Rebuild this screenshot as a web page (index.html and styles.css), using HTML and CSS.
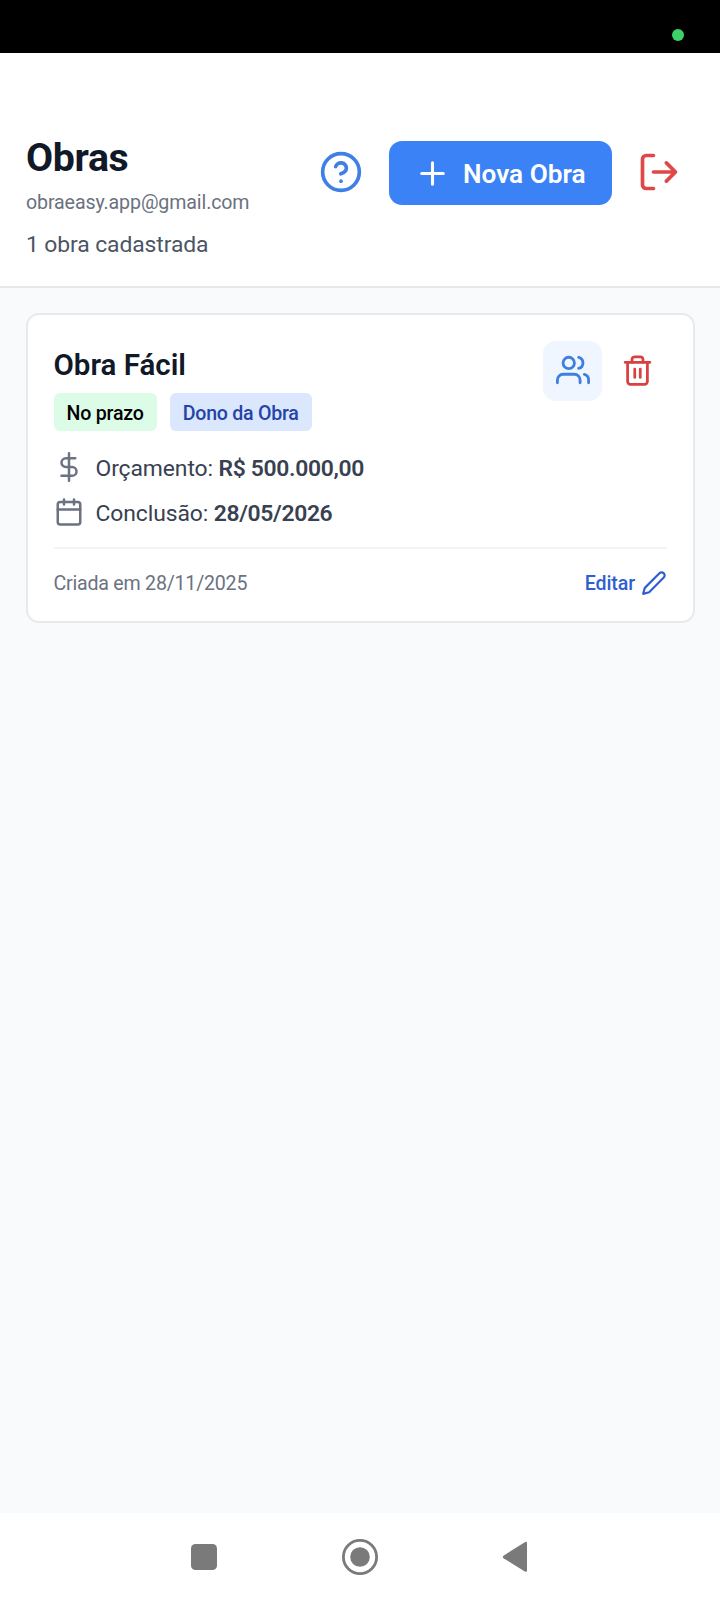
FILE: index.html
```html
<!DOCTYPE html>
<html lang="pt-BR">
<head>
    <meta charset="UTF-8">
    <meta name="viewport" content="width=device-width, initial-scale=1.0">
    <title>Obras</title>
    <link rel="stylesheet" href="styles.css">
</head>
<body>
    <div class="status-bar">
        <span class="status-dot"></span>
    </div>

    <header class="header">
        <div class="header-info">
            <h1 class="title">Obras</h1>
            <p class="email">obraeasy.app@gmail.com</p>
            <p class="count">1 obra cadastrada</p>
        </div>
        <div class="header-actions">
            <button class="icon-button help-button" aria-label="Ajuda">
                <svg class="icon" width="44" height="44" viewBox="0 0 24 24">
                    <circle cx="12" cy="12" r="10"/>
                    <path d="M9.09 9a3 3 0 0 1 5.83 1c0 2-3 3-3 3"/>
                    <path d="M12 17h.01"/>
                </svg>
            </button>
            <button class="new-button">
                <svg class="icon" width="37" height="37" viewBox="0 0 24 24">
                    <path d="M12 5v14M5 12h14"/>
                </svg>
                <span>Nova Obra</span>
            </button>
            <button class="icon-button logout-button" aria-label="Sair">
                <svg class="icon" width="44" height="44" viewBox="0 0 24 24">
                    <path d="M9 21H5a2 2 0 0 1-2-2V5a2 2 0 0 1 2-2h4"/>
                    <path d="M16 17l5-5-5-5M21 12H9"/>
                </svg>
            </button>
        </div>
    </header>

    <main class="content">
        <article class="card">
            <div class="card-header">
                <div class="card-info">
                    <h2 class="card-title">Obra Fácil</h2>
                    <div class="badges">
                        <span class="badge badge-status">No prazo</span>
                        <span class="badge badge-role">Dono da Obra</span>
                    </div>
                </div>
                <div class="card-actions">
                    <button class="icon-button users-button" aria-label="Usuários">
                        <svg class="icon" width="34" height="34" viewBox="0 0 24 24">
                            <path d="M17 21v-2a4 4 0 0 0-4-4H5a4 4 0 0 0-4 4v2"/>
                            <circle cx="9" cy="7" r="4"/>
                            <path d="M23 21v-2a4 4 0 0 0-3-3.87M16 3.13a4 4 0 0 1 0 7.75"/>
                        </svg>
                    </button>
                    <button class="icon-button delete-button" aria-label="Excluir">
                        <svg class="icon" width="33" height="33" viewBox="0 0 24 24">
                            <path d="M3 6h18M19.2 6v14a2 2 0 0 1-2 2H6.800a2 2 0 0 1-2-2V6"/>
                            <path d="M8 6V4a2 2 0 0 1 2-2h4a2 2 0 0 1 2 2v2M10 11v6M14 11v6"/>
                        </svg>
                    </button>
                </div>
            </div>

            <div class="details">
                <div class="detail">
                    <svg class="icon" width="30" height="30" viewBox="0 0 24 24">
                        <path d="M12 1v22M17 5H9.5a3.5 3.5 0 0 0 0 7h5a3.5 3.5 0 0 1 0 7H6"/>
                    </svg>
                    <span class="detail-text">Orçamento: <strong>R$ 500.000,00</strong></span>
                </div>
                <div class="detail">
                    <svg class="icon" width="30" height="30" viewBox="0 0 24 24">
                        <rect x="3" y="4" width="18" height="18" rx="2"/>
                        <path d="M16 2v4M8 2v4M3 10h18"/>
                    </svg>
                    <span class="detail-text">Conclusão: <strong>28/05/2026</strong></span>
                </div>
            </div>

            <div class="card-footer">
                <span class="created">Criada em 28/11/2025</span>
                <a href="#" class="edit-link">
                    <span>Editar</span>
                    <svg class="icon" width="26" height="26" viewBox="0 0 24 24">
                        <path d="M17 3a2.828 2.828 0 1 1 4 4L7.5 20.5 2 22l1.5-5.5L17 3z"/>
                    </svg>
                </a>
            </div>
        </article>
    </main>

    <nav class="nav-bar">
        <svg width="26" height="26" viewBox="0 0 26 26">
            <rect width="26" height="26" rx="4.5"/>
        </svg>
        <svg width="36" height="36" viewBox="0 0 36 36">
            <circle class="nav-ring" cx="18" cy="18" r="16.6"/>
            <circle cx="18" cy="18" r="9.8"/>
        </svg>
        <svg width="26" height="32" viewBox="0 0 26 32">
            <path d="M1.5 14.7 22.8 1.2Q25 0 25 2V29.6Q25 31.5 22.8 30.4L1.5 17.3Q0 16 1.5 14.7Z"/>
        </svg>
    </nav>
</body>
</html>
```

FILE: styles.css
```css
* {
    box-sizing: border-box;
}

body {
    font-family: Roboto, sans-serif;
    background: #f9fafb;
    margin: 0;
    min-height: 100vh;
    display: flex;
    flex-direction: column;
    color: #111827;
}

h1, h2, p {
    margin: 0;
}

button {
    border: none;
    background: none;
    font-family: inherit;
    padding: 0;
}

.icon {
    display: block;
    flex-shrink: 0;
    fill: none;
    stroke: currentColor;
    stroke-width: 2;
    stroke-linecap: round;
    stroke-linejoin: round;
}

.status-bar {
    height: 53px;
    background: #000;
    display: flex;
    justify-content: flex-end;
    padding: 28.5px 36.5px 0 0;
}

.status-dot {
    width: 12px;
    height: 12px;
    border-radius: 50%;
    background: #3dd267;
}

.header {
    height: 235px;
    background: #fff;
    border-bottom: 2px solid #e5e7eb;
    display: flex;
    justify-content: space-between;
    padding: 82px 39px 0 26px;
}

.title {
    font-size: 39.3px;
    line-height: 46px;
    font-weight: 700;
    letter-spacing: -0.35px;
}

.email {
    font-size: 19.6px;
    line-height: 24px;
    letter-spacing: -0.12px;
    margin-top: 10px;
    color: #6b7280;
}

.count {
    font-size: 22.9px;
    line-height: 28px;
    letter-spacing: -0.1px;
    margin-top: 16px;
    color: #4b5563;
}

.header-actions {
    display: flex;
    align-items: center;
    height: 64px;
    margin-top: 6px;
}

.icon-button {
    display: flex;
    align-items: center;
    justify-content: center;
}

.help-button,
.logout-button {
    height: 44px;
    margin-bottom: 2px;
}

.help-button {
    color: #3f7fe6;
    margin-right: 26px;
}

.new-button {
    display: flex;
    align-items: center;
    gap: 12px;
    width: 223px;
    height: 64px;
    padding-left: 25px;
    border-radius: 13px;
    background: #3b82f6;
    color: #fff;
    font-size: 26.2px;
    font-weight: 600;
    white-space: nowrap;
}

.new-button span {
    padding-top: 2px;
}

.logout-button {
    color: #e04848;
    margin-left: 25px;
}

.content {
    flex: 1;
    padding: 25px 25px 0 26px;
}

.card {
    height: 310px;
    background: #fff;
    border: 2px solid #e8e9eb;
    border-radius: 13px;
    padding: 26px 26px 0 25.5px;
}

.card-header {
    display: flex;
    justify-content: space-between;
}

.card-title {
    font-size: 29.5px;
    line-height: 36px;
    font-weight: 600;
    margin-top: 6px;
}

.badges {
    display: flex;
    gap: 13px;
    margin-top: 10px;
}

.badge {
    height: 38px;
    padding: 0 13px;
    border-radius: 6px;
    font-size: 19.6px;
    line-height: 41px;
    font-weight: 500;
    letter-spacing: -0.2px;
}

.badge-status {
    background: #dcfce7;
    color: #000;
}

.badge-role {
    background: #dbe7fd;
    color: #2443a8;
    letter-spacing: -0.26px;
}

.card-actions {
    display: flex;
}

.users-button {
    width: 59px;
    height: 60px;
    padding-bottom: 2px;
    border-radius: 13px;
    background: #eff6ff;
    color: #3f7fe0;
}

.delete-button {
    width: 60px;
    height: 60px;
    padding-bottom: 2px;
    margin-left: 5px;
    color: #d94040;
}

.details {
    display: flex;
    flex-direction: column;
    gap: 15px;
    margin-top: 21px;
}

.detail {
    display: flex;
    align-items: center;
    gap: 12px;
    height: 30px;
    font-size: 22.9px;
    color: #374151;
}

.detail .icon {
    color: #6b7280;
}

.detail-text {
    padding-top: 2px;
    letter-spacing: -0.1px;
}

.detail strong {
    font-weight: 600;
    letter-spacing: -0.34px;
}

.card-footer {
    display: flex;
    align-items: center;
    justify-content: space-between;
    border-top: 2px solid #f3f4f6;
    margin-top: 20px;
    padding-top: 21px;
    font-size: 19.6px;
}

.created {
    color: #6b7280;
    letter-spacing: -0.22px;
}

.edit-link {
    display: flex;
    align-items: center;
    gap: 6px;
    color: #2f5fcf;
    font-weight: 500;
    letter-spacing: -0.1px;
    text-decoration: none;
}

.nav-bar {
    height: 87px;
    background: #fff;
    display: flex;
    align-items: center;
    justify-content: space-between;
    padding: 0 192px 0 191px;
    fill: #7a7a7a;
}

.nav-ring {
    fill: none;
    stroke: #7a7a7a;
    stroke-width: 2.8;
}
```
